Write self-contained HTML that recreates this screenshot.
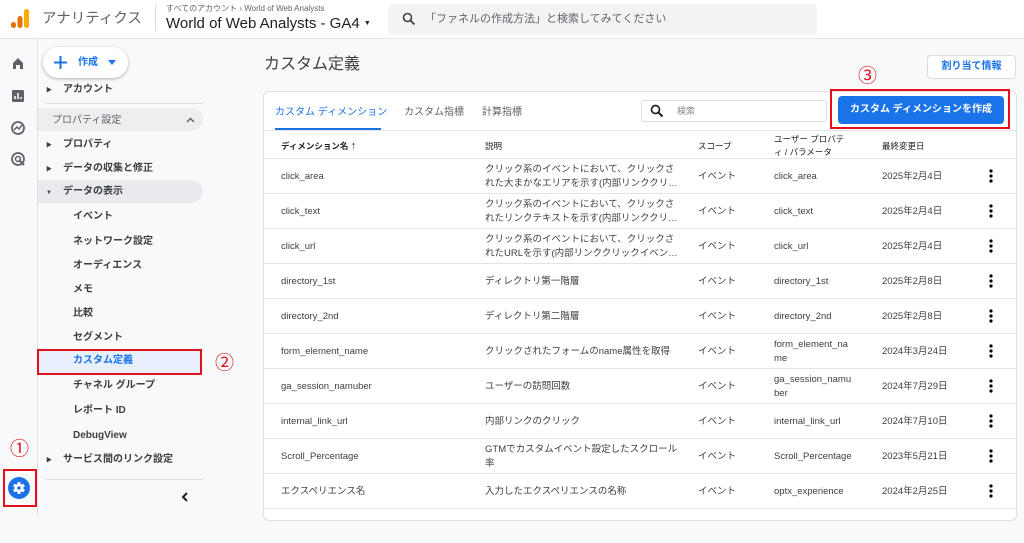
<!DOCTYPE html>
<html><head><meta charset="utf-8"><style>
*{box-sizing:border-box;margin:0;padding:0}
body{width:1024px;height:515px;overflow:hidden;background:#f8f9fa;font-family:"Liberation Sans","Noto Sans CJK JP",sans-serif;color:#202124;position:relative}
.a{position:absolute}
.hdr{left:0;top:0;width:1024px;height:39px;background:#fff;border-bottom:1px solid #e6e6e6}
.rail{left:0;top:39px;width:38px;height:476px;background:#f8f9fa;border-right:1px solid #e0e0e0}
.side{left:38px;top:39px;width:177px;height:476px;background:#f8f9fa}
.si{position:absolute;left:35px;font-size:10px;line-height:12px;font-weight:bold;color:#3c4043;white-space:nowrap;margin-top:2px}
.tri{position:absolute;left:8px;font-size:6px;line-height:8px;color:#3c4043;margin-top:2px}
.card{left:263px;top:91px;width:754px;height:430px;background:#fff;border:1px solid #e0e0e0;border-radius:6px}
.row{position:absolute;left:264px;width:752px;border-top:1px solid #e4e4e4;height:35px;font-size:9.5px;color:#3c4043}
.row span{position:absolute;white-space:nowrap;line-height:14px;margin-top:1px}
.c1{left:17px}.c2{left:221px;width:195px;white-space:normal!important}.c3{left:434px}.c4{left:510px}.c5{left:618px}
.dots{position:absolute;left:725px;top:10px}
.red{position:absolute;border:2px solid #e2101a}
.num{position:absolute;color:#e2101a;font-size:19px;line-height:20px}
</style></head><body>
<div class="a hdr">
 <svg class="a" style="left:10px;top:8px" width="20" height="22"><rect x="1" y="14" width="5" height="6" rx="2.5" fill="#e37400"/><rect x="7.5" y="8" width="5" height="12" rx="2.5" fill="#e37400"/><rect x="14" y="1" width="5" height="19" rx="2.5" fill="#f9ab00"/></svg>
 <div class="a" style="left:42px;top:10px;font-size:14.5px;line-height:18px;color:#5f6368">アナリティクス</div>
 <div class="a" style="left:155px;top:5px;width:1px;height:26px;background:#dadce0"></div>
 <div class="a" style="left:166px;top:4px;font-size:8px;line-height:10px;color:#5f6368">すべてのアカウント › World of Web Analysts</div>
 <div class="a" style="left:166px;top:15px;font-size:15px;line-height:18px;color:#202124">World of Web Analysts - GA4 <span style="font-size:7px;vertical-align:middle">▼</span></div>
 <div class="a" style="left:388px;top:4px;width:429px;height:31px;background:#f1f3f4;border-radius:5px"></div>
 <svg class="a" style="left:402px;top:12px" width="14" height="14"><circle cx="5.5" cy="5.5" r="4" fill="none" stroke="#3c4043" stroke-width="1.6"/><path d="M8.5 8.5l4 4" stroke="#3c4043" stroke-width="1.8"/></svg>
 <div class="a" style="left:425px;top:12px;font-size:11px;line-height:14px;color:#5f6368">「ファネルの作成方法」と検索してみてください</div>
</div>
<div class="a rail">
 <svg class="a" style="left:11px;top:17px" width="14" height="14"><path d="M2 7L7 2l5 5v6H9V9H5v4H2z" fill="#5f6368"/></svg>
 <svg class="a" style="left:11px;top:50px" width="14" height="14"><rect x="1" y="1" width="12" height="12" rx="1" fill="#5f6368"/><path d="M4 10V7M7 10V4M10 10V8" stroke="#fff" stroke-width="1.5"/></svg>
 <svg class="a" style="left:10px;top:81px" width="16" height="16"><circle cx="8" cy="8" r="6" fill="none" stroke="#5f6368" stroke-width="1.8"/><path d="M4 10l3-3 2 2 3-4" fill="none" stroke="#5f6368" stroke-width="1.5"/></svg>
 <svg class="a" style="left:10px;top:112px" width="16" height="16"><circle cx="8" cy="8" r="6" fill="none" stroke="#5f6368" stroke-width="1.8"/><circle cx="8" cy="8" r="2.5" fill="none" stroke="#5f6368" stroke-width="1.5"/><path d="M9 9l5 5" stroke="#5f6368" stroke-width="2"/></svg>
 <div class="red" style="left:3px;top:430px;width:34px;height:38px"></div>
 <svg class="a" style="left:8px;top:438px" width="22" height="22"><circle cx="11" cy="11" r="11" fill="#1a73e8"/><g fill="#fff" transform="translate(11 11)"><rect x="-1.6" y="-6" width="3.2" height="12" rx="0.8"/><rect x="-1.6" y="-6" width="3.2" height="12" rx="0.8" transform="rotate(60)"/><rect x="-1.6" y="-6" width="3.2" height="12" rx="0.8" transform="rotate(120)"/><circle r="4.3"/></g><circle cx="11" cy="11" r="1.8" fill="#1a73e8"/></svg>
</div>
<div class="num" style="left:10px;top:440px">①</div>
<div class="a side">
 <div class="a" style="left:5px;top:8px;width:85px;height:31px;background:#fff;border-radius:16px;box-shadow:0 1px 3px rgba(0,0,0,.3)"></div>
 <svg class="a" style="left:16px;top:17px" width="13" height="13"><path d="M6.5 0v13M0 6.5h13" stroke="#1a73e8" stroke-width="2"/></svg>
 <div class="a" style="left:40px;top:18px;font-size:10px;line-height:12px;color:#1a73e8;font-weight:bold">作成</div>
 <svg class="a" style="left:70px;top:21px" width="8" height="5"><path d="M0 0h8L4 5z" fill="#1a73e8"/></svg>
 <div class="tri" style="top:46px">▶</div><div class="si" style="top:43px;left:25px">アカウント</div>
 <div class="a" style="left:8px;top:64px;width:157px;height:1px;background:#dadce0"></div>
 <div class="a" style="left:0;top:69px;width:165px;height:23px;background:#eceef0;border-radius:0 12px 12px 0"></div>
 <div class="si" style="top:74px;left:14px;font-weight:normal;color:#5f6368">プロパティ設定</div>
 <svg class="a" style="left:148px;top:78px" width="9" height="6"><path d="M1 5l3.5-3.5L8 5" fill="none" stroke="#5f6368" stroke-width="1.5"/></svg>
 <div class="tri" style="top:101px">▶</div><div class="si" style="top:98px;left:25px">プロパティ</div>
 <div class="tri" style="top:125px">▶</div><div class="si" style="top:122px;left:25px">データの収集と修正</div>
 <div class="a" style="left:0;top:141px;width:165px;height:23px;background:#e8eaed;border-radius:0 12px 12px 0"></div>
 <div class="tri" style="top:148px">▼</div><div class="si" style="top:145px;left:25px">データの表示</div>
 <div class="si" style="top:170px">イベント</div>
 <div class="si" style="top:195px">ネットワーク設定</div>
 <div class="si" style="top:219px">オーディエンス</div>
 <div class="si" style="top:243px">メモ</div>
 <div class="si" style="top:267px">比較</div>
 <div class="si" style="top:291px">セグメント</div>
 <div class="a" style="left:0;top:311px;width:163px;height:24px;background:#e8f0fe"></div>
 <div class="red" style="left:-1px;top:310px;width:165px;height:26px"></div>
 <div class="si" style="top:314px;color:#1a73e8">カスタム定義</div>
 <div class="si" style="top:339px">チャネル グループ</div>
 <div class="si" style="top:364px">レポート ID</div>
 <div class="si" style="top:389px">DebugView</div>
 <div class="tri" style="top:416px">▶</div><div class="si" style="top:413px;left:25px">サービス間のリンク設定</div>
 <div class="a" style="left:8px;top:440px;width:157px;height:1px;background:#dadce0"></div>
 <svg class="a" style="left:143px;top:453px" width="7" height="10"><path d="M6 1L2 5l4 4" fill="none" stroke="#202124" stroke-width="2"/></svg>
</div>
<div class="num" style="left:215px;top:354px">②</div>
<div class="a" style="left:264px;top:55px;font-size:16px;line-height:20px;color:#3c4043">カスタム定義</div>
<div class="a" style="left:927px;top:55px;width:89px;height:24px;background:#fff;border:1px solid #dadce0;border-radius:4px;font-size:10px;font-weight:bold;color:#1a73e8;text-align:center;line-height:22px">割り当て情報</div>
<div class="a card"></div>
<div class="a" style="left:275px;top:107px;font-size:10px;line-height:12px;color:#1a73e8">カスタム ディメンション</div>
<div class="a" style="left:275px;top:128px;width:106px;height:2px;background:#1a73e8"></div>
<div class="a" style="left:404px;top:107px;font-size:10px;line-height:12px;color:#5f6368">カスタム指標</div>
<div class="a" style="left:482px;top:107px;font-size:10px;line-height:12px;color:#5f6368">計算指標</div>
<div class="a" style="left:641px;top:100px;width:186px;height:22px;border:1px solid #dadce0;border-radius:3px;background:#fff"></div>
<svg class="a" style="left:650px;top:104px" width="14" height="14"><circle cx="5.5" cy="5.5" r="4" fill="none" stroke="#202124" stroke-width="1.7"/><path d="M8.5 8.5l4 4" stroke="#202124" stroke-width="2"/></svg>
<div class="a" style="left:677px;top:106px;font-size:9px;line-height:11px;color:#80868b">検索</div>
<div class="red" style="left:830px;top:89px;width:180px;height:40px"></div>
<div class="a" style="left:838px;top:96px;width:166px;height:28px;background:#1a73e8;border-radius:4px;color:#fff;font-size:10px;font-weight:bold;text-align:center;line-height:28px">カスタム ディメンションを作成</div>
<div class="num" style="left:858px;top:67px">③</div>
<div class="row" style="top:130px;height:28px;font-size:8.5px;color:#202124">
 <span class="c1" style="top:7px;font-weight:bold">ディメンション名 <b style="font-size:11px">↑</b></span><span class="c2" style="top:7px">説明</span><span class="c3" style="top:7px">スコープ</span><span class="c4" style="top:1px;line-height:13px">ユーザー プロパテ<br>ィ / パラメータ</span><span class="c5" style="top:7px">最終変更日</span>
</div>
<div class="row" style="top:158px"><span class="c1" style="top:10px">click_area</span><span class="c2" style="top:3px">クリック系のイベントにおいて、クリックされた大まかなエリアを示す(内部リンククリ…</span><span class="c3" style="top:10px">イベント</span><span class="c4" style="top:10px">click_area</span><span class="c5" style="top:10px">2025年2月4日</span><svg class="dots" width="4" height="14"><circle cx="2" cy="2" r="1.6"/><circle cx="2" cy="7" r="1.6"/><circle cx="2" cy="12" r="1.6"/></svg></div>
<div class="row" style="top:193px"><span class="c1" style="top:10px">click_text</span><span class="c2" style="top:3px">クリック系のイベントにおいて、クリックされたリンクテキストを示す(内部リンククリ…</span><span class="c3" style="top:10px">イベント</span><span class="c4" style="top:10px">click_text</span><span class="c5" style="top:10px">2025年2月4日</span><svg class="dots" width="4" height="14"><circle cx="2" cy="2" r="1.6"/><circle cx="2" cy="7" r="1.6"/><circle cx="2" cy="12" r="1.6"/></svg></div>
<div class="row" style="top:228px"><span class="c1" style="top:10px">click_url</span><span class="c2" style="top:3px">クリック系のイベントにおいて、クリックされたURLを示す(内部リンククリックイベン…</span><span class="c3" style="top:10px">イベント</span><span class="c4" style="top:10px">click_url</span><span class="c5" style="top:10px">2025年2月4日</span><svg class="dots" width="4" height="14"><circle cx="2" cy="2" r="1.6"/><circle cx="2" cy="7" r="1.6"/><circle cx="2" cy="12" r="1.6"/></svg></div>
<div class="row" style="top:263px"><span class="c1" style="top:10px">directory_1st</span><span class="c2" style="top:10px">ディレクトリ第一階層</span><span class="c3" style="top:10px">イベント</span><span class="c4" style="top:10px">directory_1st</span><span class="c5" style="top:10px">2025年2月8日</span><svg class="dots" width="4" height="14"><circle cx="2" cy="2" r="1.6"/><circle cx="2" cy="7" r="1.6"/><circle cx="2" cy="12" r="1.6"/></svg></div>
<div class="row" style="top:298px"><span class="c1" style="top:10px">directory_2nd</span><span class="c2" style="top:10px">ディレクトリ第二階層</span><span class="c3" style="top:10px">イベント</span><span class="c4" style="top:10px">directory_2nd</span><span class="c5" style="top:10px">2025年2月8日</span><svg class="dots" width="4" height="14"><circle cx="2" cy="2" r="1.6"/><circle cx="2" cy="7" r="1.6"/><circle cx="2" cy="12" r="1.6"/></svg></div>
<div class="row" style="top:333px"><span class="c1" style="top:10px">form_element_name</span><span class="c2" style="top:10px">クリックされたフォームのname属性を取得</span><span class="c3" style="top:10px">イベント</span><span class="c4" style="top:3px">form_element_na<br>me</span><span class="c5" style="top:10px">2024年3月24日</span><svg class="dots" width="4" height="14"><circle cx="2" cy="2" r="1.6"/><circle cx="2" cy="7" r="1.6"/><circle cx="2" cy="12" r="1.6"/></svg></div>
<div class="row" style="top:368px"><span class="c1" style="top:10px">ga_session_namuber</span><span class="c2" style="top:10px">ユーザーの訪問回数</span><span class="c3" style="top:10px">イベント</span><span class="c4" style="top:3px">ga_session_namu<br>ber</span><span class="c5" style="top:10px">2024年7月29日</span><svg class="dots" width="4" height="14"><circle cx="2" cy="2" r="1.6"/><circle cx="2" cy="7" r="1.6"/><circle cx="2" cy="12" r="1.6"/></svg></div>
<div class="row" style="top:403px"><span class="c1" style="top:10px">internal_link_url</span><span class="c2" style="top:10px">内部リンクのクリック</span><span class="c3" style="top:10px">イベント</span><span class="c4" style="top:10px">internal_link_url</span><span class="c5" style="top:10px">2024年7月10日</span><svg class="dots" width="4" height="14"><circle cx="2" cy="2" r="1.6"/><circle cx="2" cy="7" r="1.6"/><circle cx="2" cy="12" r="1.6"/></svg></div>
<div class="row" style="top:438px"><span class="c1" style="top:10px">Scroll_Percentage</span><span class="c2" style="top:3px">GTMでカスタムイベント設定したスクロール率</span><span class="c3" style="top:10px">イベント</span><span class="c4" style="top:10px">Scroll_Percentage</span><span class="c5" style="top:10px">2023年5月21日</span><svg class="dots" width="4" height="14"><circle cx="2" cy="2" r="1.6"/><circle cx="2" cy="7" r="1.6"/><circle cx="2" cy="12" r="1.6"/></svg></div>
<div class="row" style="top:473px"><span class="c1" style="top:10px">エクスペリエンス名</span><span class="c2" style="top:10px">入力したエクスペリエンスの名称</span><span class="c3" style="top:10px">イベント</span><span class="c4" style="top:10px">optx_experience</span><span class="c5" style="top:10px">2024年2月25日</span><svg class="dots" width="4" height="14"><circle cx="2" cy="2" r="1.6"/><circle cx="2" cy="7" r="1.6"/><circle cx="2" cy="12" r="1.6"/></svg></div>
<div class="row" style="top:508px"></div>
</body></html>
